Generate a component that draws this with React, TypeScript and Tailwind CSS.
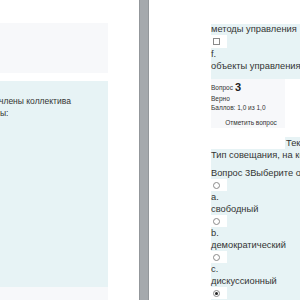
const font = "font-['Liberation_Sans','Arial',sans-serif]"

function Radio({ checked = false }: { checked?: boolean }) {
  return (
    <div className="h-[12px] w-[16px] bg-white flex items-center pl-[2px]">
      <span className="w-[7px] h-[7px] rounded-full border border-[#8a8a8a] bg-white flex items-center justify-center">
        {checked && <span className="w-[3px] h-[3px] rounded-full bg-[#222]" />}
      </span>
    </div>
  )
}

function Line({ children }: { children: React.ReactNode }) {
  return <div className="h-[12px] leading-[12px] whitespace-nowrap">{children}</div>
}

export default function App() {
  return (
    <div className={`w-[300px] h-[300px] overflow-hidden flex bg-white text-[#333] ${font}`}>
      {/* левое окно */}
      <div className="w-[108px] shrink-0 flex flex-col pt-[23px]">
        <div className="h-[50px] bg-[#f7f8fa]" />
        <div className="h-[8px]" />
        <div className="h-[206px] bg-[#e7f3f5] pt-[14px] text-[8.5px] overflow-hidden">
          <div className="h-[12px] leading-[12px] whitespace-nowrap ml-[-1px]">члены коллектива</div>
          <div className="h-[12px] leading-[12px] whitespace-nowrap">ы:</div>
        </div>
        <div className="flex-1 bg-[#f7f8fa]" />
      </div>

      <div className="w-[31px] shrink-0" />
      {/* разделитель */}
      <div className="w-[10px] shrink-0 bg-[#a5a9ad] border-l border-r border-[#93979b]" />
      <div className="w-[62px] shrink-0" />

      {/* правое окно */}
      <div className="w-[200px] shrink-0 flex flex-col pt-[24px] text-[9.3px]">
        <div className="bg-[#e7f3f5] pb-[7px]">
          <div className="h-[11px] leading-[11px] whitespace-nowrap">методы управления</div>
          <div className="h-[13px] w-[16px] bg-white flex items-center pl-[2px]">
            <span className="w-[7px] h-[7px] border border-[#8a8a8a] bg-white" />
          </div>
          <Line>f.</Line>
          <Line>объекты управления</Line>
        </div>

        <div className="h-[49px] w-[74px] bg-[#f7f8fa] text-[6.5px] pt-[2px] flex flex-col">
          <div className="h-[12px] flex items-end whitespace-nowrap">
            Вопрос <span className="font-bold text-[11px] leading-[11px] ml-[2px] text-[#222]">3</span>
          </div>
          <div className="h-[9px] leading-[9px] mt-[1px]">Верно</div>
          <div className="h-[9px] leading-[9px] whitespace-nowrap">Баллов: 1,0 из 1,0</div>
          <div className="flex-1" />
          <div className="h-[10px] leading-[10px] text-center whitespace-nowrap pl-[6px]">Отметить вопрос</div>
        </div>

        <div className="h-[9px]" />
        <div className="h-[12px] flex">
          <div className="w-[74px] bg-white" />
          <div className="flex-1 bg-[#e7f3f5] leading-[12px] whitespace-nowrap pl-[1px]">Текст вопроса</div>
        </div>
        <div className="bg-[#e7f3f5] flex-1">
          <Line>Тип совещания, на котором принимаются решения</Line>
          <div className="h-[6px]" />
          <Line>Вопрос 3Выберите один ответ:</Line>
          <Radio />
          <Line>a.</Line>
          <Line>свободный</Line>
          <Radio />
          <Line>b.</Line>
          <Line>демократический</Line>
          <Radio />
          <Line>c.</Line>
          <Line>дискуссионный</Line>
          <Radio checked />
        </div>
      </div>
    </div>
  )
}
